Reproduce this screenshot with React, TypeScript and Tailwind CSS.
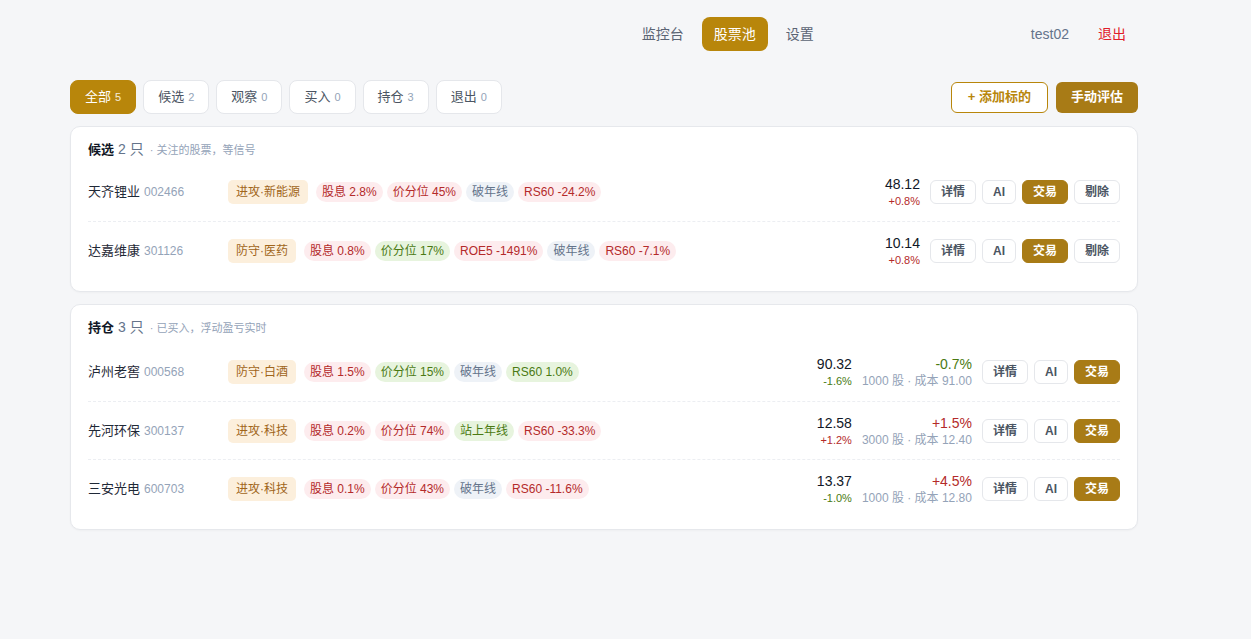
import React from "react";

type Tone = "red" | "green" | "gray";

interface Pill {
  text: string;
  tone: Tone;
}

interface StockRow {
  name: string;
  code: string;
  category: string;
  pills: Pill[];
  price: string;
  change: string;
  changeUp: boolean;
  // 持仓才有
  pnl?: string;
  pnlUp?: boolean;
  position?: string;
}

const TABS = [
  { label: "全部", count: 5 },
  { label: "候选", count: 2 },
  { label: "观察", count: 0 },
  { label: "买入", count: 0 },
  { label: "持仓", count: 3 },
  { label: "退出", count: 0 },
];

const CANDIDATES: StockRow[] = [
  {
    name: "天齐锂业",
    code: "002466",
    category: "进攻·新能源",
    pills: [
      { text: "股息 2.8%", tone: "red" },
      { text: "价分位 45%", tone: "red" },
      { text: "破年线", tone: "gray" },
      { text: "RS60 -24.2%", tone: "red" },
    ],
    price: "48.12",
    change: "+0.8%",
    changeUp: true,
  },
  {
    name: "达嘉维康",
    code: "301126",
    category: "防守·医药",
    pills: [
      { text: "股息 0.8%", tone: "red" },
      { text: "价分位 17%", tone: "green" },
      { text: "ROE5 -1491%", tone: "red" },
      { text: "破年线", tone: "gray" },
      { text: "RS60 -7.1%", tone: "red" },
    ],
    price: "10.14",
    change: "+0.8%",
    changeUp: true,
  },
];

const HOLDINGS: StockRow[] = [
  {
    name: "泸州老窖",
    code: "000568",
    category: "防守·白酒",
    pills: [
      { text: "股息 1.5%", tone: "red" },
      { text: "价分位 15%", tone: "green" },
      { text: "破年线", tone: "gray" },
      { text: "RS60 1.0%", tone: "green" },
    ],
    price: "90.32",
    change: "-1.6%",
    changeUp: false,
    pnl: "-0.7%",
    pnlUp: false,
    position: "1000 股 · 成本 91.00",
  },
  {
    name: "先河环保",
    code: "300137",
    category: "进攻·科技",
    pills: [
      { text: "股息 0.2%", tone: "red" },
      { text: "价分位 74%", tone: "red" },
      { text: "站上年线", tone: "green" },
      { text: "RS60 -33.3%", tone: "red" },
    ],
    price: "12.58",
    change: "+1.2%",
    changeUp: true,
    pnl: "+1.5%",
    pnlUp: true,
    position: "3000 股 · 成本 12.40",
  },
  {
    name: "三安光电",
    code: "600703",
    category: "进攻·科技",
    pills: [
      { text: "股息 0.1%", tone: "red" },
      { text: "价分位 43%", tone: "red" },
      { text: "破年线", tone: "gray" },
      { text: "RS60 -11.6%", tone: "red" },
    ],
    price: "13.37",
    change: "-1.0%",
    changeUp: false,
    pnl: "+4.5%",
    pnlUp: true,
    position: "1000 股 · 成本 12.80",
  },
];

const PILL_TONE: Record<Tone, string> = {
  red: "bg-[#fdecee] text-[#b42a2a]",
  green: "bg-[#e7f4de] text-[#4a7a12]",
  gray: "bg-[#eef2f7] text-[#64748b]",
};

function GhostButton({ children }: { children: React.ReactNode }) {
  return (
    <button
      type="button"
      className="h-6 rounded-md border border-[#e5e7eb] bg-white px-[10px] text-xs font-bold leading-none text-[#4b5563]"
    >
      {children}
    </button>
  );
}

function TradeButton() {
  return (
    <button
      type="button"
      className="h-6 rounded-md border border-[#a87b16] bg-[#a87b16] px-[10px] text-xs font-bold leading-none text-white"
    >
      交易
    </button>
  );
}

function Row({ row, first, holding }: { row: StockRow; first: boolean; holding: boolean }) {
  const upColor = "text-[#b42a2a]";
  const downColor = "text-[#4a7a12]";
  return (
    <div
      className={`flex h-[58px] items-center ${first ? "" : "border-t border-dashed border-[#eceef2]"}`}
    >
      {/* 名称 + 代码 */}
      <div className="flex w-[140px] shrink-0 items-baseline gap-1">
        <span className="text-[13px] text-[#1f2937]">{row.name}</span>
        <span className="text-xs text-[#94a3b8]">{row.code}</span>
      </div>

      {/* 标签 */}
      <div className="flex flex-1 items-center">
        <span className="mr-2 rounded-[5px] bg-[#fcefdc] px-2 py-1 text-xs leading-4 text-[#a0651a]">
          {row.category}
        </span>
        <div className="flex items-center gap-1">
          {row.pills.map((p) => (
            <span
              key={p.text}
              className={`rounded-full px-1.5 py-0.5 text-xs leading-4 ${PILL_TONE[p.tone]}`}
            >
              {p.text}
            </span>
          ))}
        </div>
      </div>

      {/* 价格 / 盈亏 / 操作 */}
      <div className="flex items-center gap-2.5">
        <div className="flex flex-col items-end">
          <span className="text-sm leading-[18px] text-[#111827]">{row.price}</span>
          <span className={`text-[11px] leading-4 ${row.changeUp ? upColor : downColor}`}>
            {row.change}
          </span>
        </div>
        {holding && (
          <div className="flex flex-col items-end">
            <span className={`text-sm leading-[18px] ${row.pnlUp ? upColor : downColor}`}>
              {row.pnl}
            </span>
            <span className="text-xs leading-4 text-[#94a3b8]">{row.position}</span>
          </div>
        )}
        <div className="flex items-center gap-1.5">
          <GhostButton>详情</GhostButton>
          <GhostButton>AI</GhostButton>
          <TradeButton />
          {!holding && <GhostButton>剔除</GhostButton>}
        </div>
      </div>
    </div>
  );
}

function Section({
  title,
  count,
  hint,
  rows,
  holding,
}: {
  title: string;
  count: number;
  hint: string;
  rows: StockRow[];
  holding: boolean;
}) {
  return (
    <section className="rounded-[10px] border border-[#e6e8ec] bg-white px-[17px] pb-3 pt-3 shadow-[0_1px_2px_rgba(15,23,42,0.03)]">
      <div className={`flex h-[18px] items-baseline gap-1 ${holding ? "mb-2" : "mb-1.5"}`}>
        <span className="text-[13px] font-bold text-[#111827]">{title}</span>
        <span className="text-sm text-[#64748b]">{count} 只</span>
        <span className="ml-0.5 text-[11px] text-[#94a3b8]">· {hint}</span>
      </div>
      {rows.map((r, i) => (
        <Row key={r.code} row={r} first={i === 0} holding={holding} />
      ))}
    </section>
  );
}

export default function App() {
  return (
    <div className="min-h-[639px] bg-[#f5f6f8] font-['Liberation_Sans','Noto_Sans_CJK_SC',sans-serif]">
      <div className="ml-[70px] w-[1068px] pt-[17px]">
        {/* 顶部导航 */}
        <header className="flex h-[34px] items-center">
          <nav className="ml-auto flex items-center gap-1.5">
            <a className="rounded-lg px-3 py-[7px] text-sm text-[#5b6474]">监控台</a>
            <a className="rounded-lg bg-[#b8860b] px-3 py-[7px] text-sm text-white">股票池</a>
            <a className="rounded-lg px-3 py-[7px] text-sm text-[#5b6474]">设置</a>
          </nav>
          <div className="ml-[205px] flex items-center gap-[17px]">
            <span className="text-sm text-[#64748b]">test02</span>
            <button type="button" className="px-3 py-[7px] text-sm text-[#e11d2a]">
              退出
            </button>
          </div>
        </header>

        {/* 筛选 + 操作 */}
        <div className="mt-[29px] flex items-center">
          <div className="flex items-center gap-[7px]">
            {TABS.map((t, i) => (
              <button
                key={t.label}
                type="button"
                className={`flex h-[34px] items-center gap-1 rounded-lg border px-[14px] text-[13px] ${
                  i === 0
                    ? "border-[#b8860b] bg-[#b8860b] text-white"
                    : "border-[#e5e7eb] bg-white text-[#4b5563]"
                }`}
              >
                {t.label}
                <span className={`text-[11px] ${i === 0 ? "text-white/85" : "text-[#94a3b8]"}`}>
                  {t.count}
                </span>
              </button>
            ))}
          </div>
          <div className="ml-auto flex items-center gap-2">
            <button
              type="button"
              className="h-[31px] rounded-md border border-[#b8860b] bg-white px-4 text-[13px] font-bold text-[#b8860b]"
            >
              + 添加标的
            </button>
            <button
              type="button"
              className="h-[31px] rounded-md bg-[#a87b16] px-[15px] text-[13px] font-bold text-white"
            >
              手动评估
            </button>
          </div>
        </div>

        {/* 列表 */}
        <div className="mt-3 flex flex-col gap-3">
          <Section title="候选" count={2} hint="关注的股票，等信号" rows={CANDIDATES} holding={false} />
          <Section title="持仓" count={3} hint="已买入，浮动盈亏实时" rows={HOLDINGS} holding />
        </div>
      </div>
    </div>
  );
}
